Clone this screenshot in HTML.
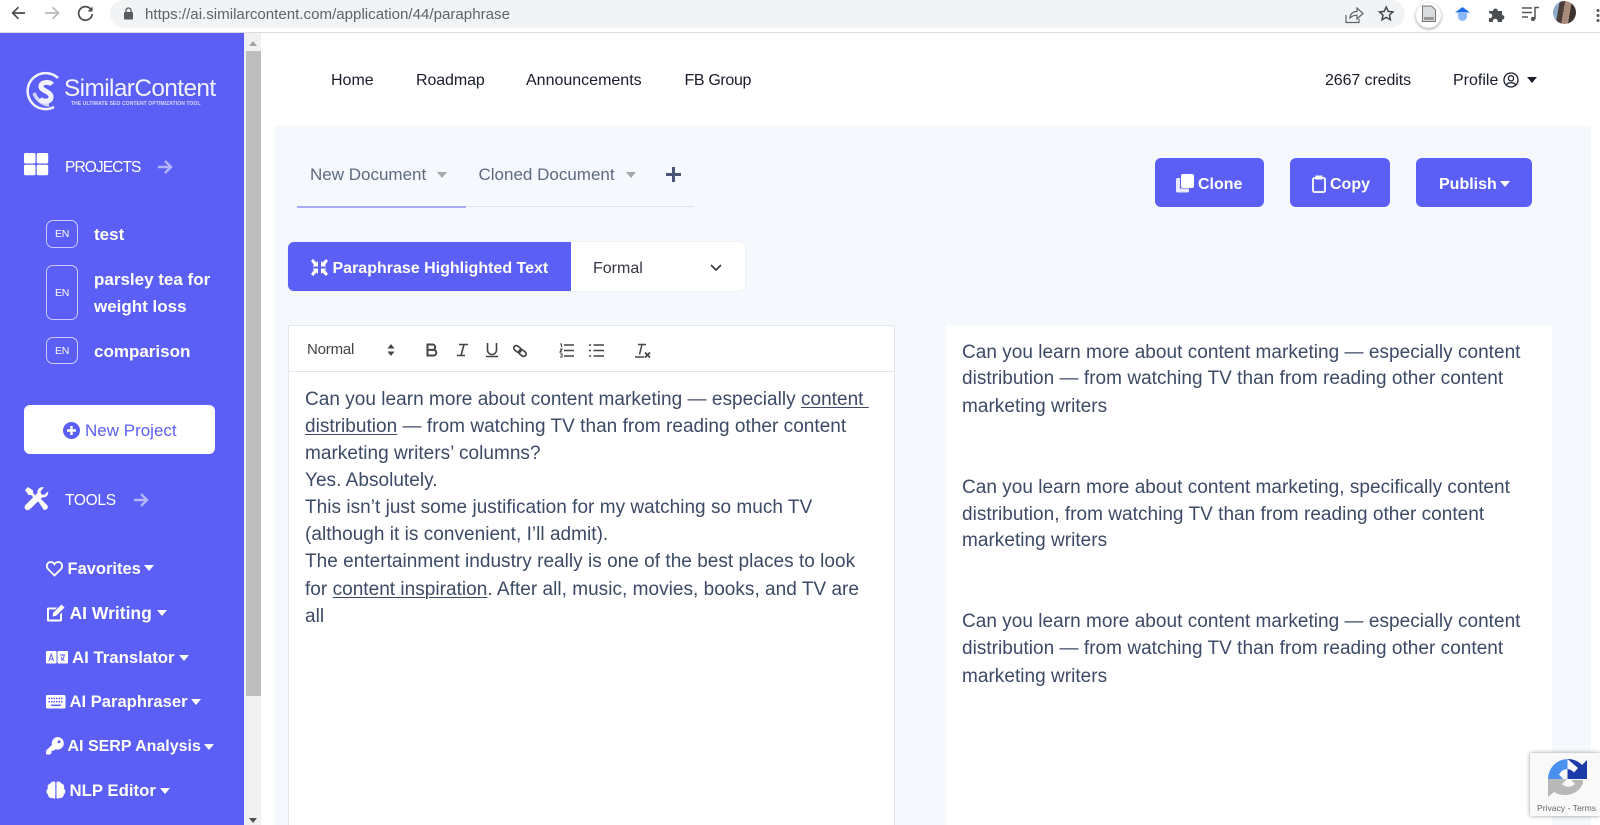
<!DOCTYPE html>
<html><head><meta charset="utf-8"><title>Paraphrase</title>
<style>
html,body{margin:0;padding:0;width:1600px;height:825px;overflow:hidden;background:#fff;font-family:"Liberation Sans",sans-serif}
.a{position:absolute;white-space:nowrap;line-height:20px}
svg{position:absolute;overflow:visible}
.side{color:#fff;font-weight:bold;font-size:17px}
.nav{color:#1a1d2b;font-size:16px;top:71px}
.l{position:absolute;white-space:nowrap;font-size:19px;letter-spacing:.03px;line-height:27px;color:#3c4a66}
.l u{text-underline-offset:2px;text-decoration-thickness:1px}
.badge{position:absolute;left:46px;width:30px;border:1.3px solid #c9caff;border-radius:7px;color:#fff;font-size:10.500px;letter-spacing:-.3px;display:flex;align-items:center;justify-content:center}
.btn{position:absolute;background:#5c5ff6;border-radius:6px;top:158px;height:49px}
.btnt{color:#fff;font-weight:bold;font-size:16px}
.car{position:absolute;width:0;height:0;border-left:5px solid transparent;border-right:5px solid transparent;border-top:6px solid #fff}
</style></head><body>

<!-- browser chrome -->
<div style="position:absolute;left:0;top:0;width:1600px;height:32px;background:#fff;border-bottom:1px solid #dcdcdc"></div>
<svg style="left:0;top:0" width="100" height="30" fill="none" stroke-width="1.7">
<path d="M25 13H13M18.500 7.200L12.600 13l5.900 5.800" stroke="#4a4d50"/>
<path d="M45 13h13M52.500 7.200L58.400 13l-5.900 5.800" stroke="#b5b7b9"/>
<path d="M91 9.500A6.800 6.800 0 1 0 92.200 14" stroke="#4a4d50"/><path d="M92.500 6.500v5h-5z" fill="#4a4d50"/>
</svg>
<div style="position:absolute;left:110px;top:0;width:1295px;height:28px;background:#f1f3f4;border-radius:14px"></div>
<svg style="left:123px;top:7px" width="11" height="13"><rect x="1" y="5" width="9" height="7.500" rx="1" fill="#5a5c5f"/><path d="M3 5.500V3.500a2.500 2.500 0 0 1 5 0v2" fill="none" stroke="#5a5c5f" stroke-width="1.300"/></svg>
<div class="a" style="left:145px;top:5px;font-size:15.100px;color:#5f6368">https://ai.similarcontent.com/application/44/paraphrase</div>
<svg style="left:1344px;top:5px" width="20" height="20" fill="none" stroke="#5f6368" stroke-width="1.200"><path d="M2 10v7.500h13V14M6 13c0-4 3-6.500 7-6.500V3l6 5.500-6 5.500v-3.800c-3 0-5 .8-7 2.800z"/></svg>
<svg style="left:1378px;top:5px" width="17" height="17" fill="none" stroke="#45484b" stroke-width="1.500"><path d="M8.200 2l2 4.400 4.700.5-3.500 3.200 1 4.700-4.200-2.400-4.200 2.400 1-4.700L1.500 6.900l4.700-.5z"/></svg>
<div style="position:absolute;left:1416px;top:3px;width:25px;height:25px;border-radius:50%;background:#fff;box-shadow:0 1px 3px #999"></div>
<svg style="left:1421px;top:5px" width="16" height="18"><path d="M1.500 1h9l4 4v11.500h-13z" fill="#dadbdc" stroke="#777" stroke-width="1"/><rect x="3" y="12" width="10" height="3" fill="#999"/></svg>
<svg style="left:1455px;top:6px" width="16" height="16"><path d="M0 6.500L7.500 1 15 6.500z" fill="#1a6ce8"/><path d="M3 7h9v3.500A4.500 4.500 0 0 1 3 10.500z" fill="#8ab8f8"/></svg>
<svg style="left:1488px;top:5px" width="18" height="18"><path d="M1 6h4a2.400 2.400 0 1 1 4.800 0h4.200v4a2.400 2.400 0 1 1 0 4.800V17H9.500a2.400 2.400 0 1 0-4.500 0H1v-4a2.400 2.400 0 1 0 0-4.500z" fill="#4c4f52"/></svg>
<svg style="left:1522px;top:6px" width="18" height="16" fill="none" stroke="#55585b" stroke-width="1.500"><path d="M0 2h10M0 6.500h10M0 11h6M13 13V1.500h4"/><circle cx="11" cy="13" r="2.200" fill="#55585b" stroke="none"/></svg>
<div style="position:absolute;left:1553px;top:1px;width:23px;height:23px;border-radius:50%;background:linear-gradient(100deg,#8fa9c9 0 25%,#4a3c38 25% 45%,#a98a7a 45% 70%,#3b3230 70%)"></div>
<svg style="left:1596px;top:9px" width="4" height="14" fill="#555"><circle cx="2" cy="1.500" r="1.500"/><circle cx="2" cy="6.500" r="1.500"/><circle cx="2" cy="11.500" r="1.500"/></svg>

<!-- sidebar -->
<div style="position:absolute;left:0;top:33px;width:244px;height:792px;background:#5c5ff6"></div>
<div style="position:absolute;left:244px;top:33px;width:2px;height:792px;background:#eef"></div>
<div style="position:absolute;left:246px;top:33px;width:15px;height:792px;background:#f1f1f1"></div>
<div style="position:absolute;left:246px;top:51px;width:15px;height:645px;background:#bebebe"></div>
<div class="car" style="left:249px;top:41px;border-top:0;border-bottom:5px solid #a3a3a3;border-left-width:4.500px;border-right-width:4.500px"></div>
<div class="car" style="left:249px;top:818px;border-top:5px solid #505050;border-left-width:4.500px;border-right-width:4.500px"></div>

<!-- logo -->
<svg style="left:24px;top:71px" width="40" height="40" fill="none" stroke="#f2f2ff"><path d="M34 7A18 18 0 1 0 30 36" stroke-width="2.500"/><path d="M10 22A18 18 0 0 0 25 34" stroke-width="3.500" opacity=".8"/><path d="M28 13.500c-2-2.500-10-3.500-11 1.500-1 5 11 5 10 12-1 4-8 4-11 1" stroke-width="5"/></svg>
<div class="a" style="left:64px;top:76px;font-size:24.400px;color:#f2f2ff;letter-spacing:-.6px;line-height:26px">SimilarContent</div>
<div class="a" style="left:71px;top:100px;font-size:5px;line-height:8px;color:#d8d9ff;font-weight:bold;letter-spacing:.1px">THE ULTIMATE SEO CONTENT OPTIMIZATION TOOL</div>

<!-- projects -->
<svg style="left:24px;top:153px" width="25" height="22" fill="#fff"><rect width="11.500" height="10.500" rx="1.500"/><rect x="12.700" width="11.500" height="10.500" rx="1.500"/><rect y="11.700" width="11.500" height="10.500" rx="1.500"/><rect x="12.700" y="11.700" width="11.500" height="10.500" rx="1.500"/></svg>
<div class="a" style="left:65px;top:158px;font-size:15.500px;color:#fff;letter-spacing:-.9px">PROJECTS</div>
<svg style="left:158px;top:160px" width="14" height="14" fill="none" stroke="#b3b5fb" stroke-width="2.400"><path d="M0 7h12.500M7 1l6 6-6 6"/></svg>

<div class="badge" style="top:220px;height:26px">EN</div>
<div class="a side" style="left:94px;top:225px">test</div>
<div class="badge" style="top:265px;height:53px">EN</div>
<div class="a side" style="left:94px;top:270px">parsley tea for</div>
<div class="a side" style="left:94px;top:297px">weight loss</div>
<div class="badge" style="top:337px;height:25px">EN</div>
<div class="a side" style="left:94px;top:342px">comparison</div>

<div style="position:absolute;left:24px;top:405px;width:191px;height:49px;background:#fff;border-radius:6px"></div>
<svg style="left:63px;top:422px" width="17" height="17"><circle cx="8.500" cy="8.500" r="8.500" fill="#5c5ff6"/><path d="M8.500 4v9M4 8.500h9" stroke="#fff" stroke-width="2.400"/></svg>
<div class="a" style="left:85px;top:421px;font-size:17px;color:#5c5ff6">New Project</div>

<!-- tools -->
<svg style="left:24px;top:486px" width="25" height="25" fill="#fff"><path d="M1 4l3-3 5 3.500v2.500l5.500 5.500-2 2L7 9H4.500z"/><path d="M24 5.500l-3.800 3.500-3-.7-.7-3L20 1.500c-3-1.200-7 .8-6.500 5.500L1.500 19a3 3 0 0 0 4.300 4.300L18 11.500c4.500.5 7-3.200 6-6z"/><path d="M14 15l2.500-2.500 7 7a3 3 0 0 1-4 4z"/></svg>
<div class="a" style="left:65px;top:491px;font-size:15.500px;color:#fff;letter-spacing:-.3px">TOOLS</div>
<svg style="left:134px;top:493px" width="14" height="14" fill="none" stroke="#b3b5fb" stroke-width="2.400"><path d="M0 7h12.500M7 1l6 6-6 6"/></svg>

<svg style="left:46px;top:561px" width="17" height="16" fill="none" stroke="#fff" stroke-width="1.800"><path d="M8.500 14.500L2 8C-.5 5 1.500 1 4.700 1c1.800 0 3 1 3.800 2.300C9.300 2 10.500 1 12.300 1c3.200 0 5.200 4 2.700 7z"/></svg>
<div class="a side" style="left:67.500px;top:558.500px;font-size:16.500px">Favorites</div><div class="car" style="left:144px;top:565px"></div>

<svg style="left:46px;top:603px" width="20" height="19"><path d="M2 4.500h9l-2 2H3v10h11v-5l2-2V17a1.500 1.500 0 0 1-1.500 1.500h-12A1.500 1.500 0 0 1 1 17V6a1.500 1.500 0 0 1 1-1.500z" fill="#fff"/><path d="M6.500 13.500l.7-3.700L15.500 1.500l3 3-8.300 8.300z" fill="#fff"/></svg>
<div class="a side" style="left:69.500px;top:603px;font-size:17.500px">AI Writing</div><div class="car" style="left:157px;top:610px"></div>

<svg style="left:46px;top:651px" width="22" height="13"><rect width="10.500" height="12.500" rx="1" fill="#fff"/><rect x="11.500" width="10.500" height="12.500" rx="1" fill="#fff"/><path d="M3 10l2.200-7 2.300 7M3.800 8h3M14 4h5M16.500 3v1.500M15 9.500c2-1 3-3 3.200-5M15 6c.5 1.500 2 3 3.500 3.500" stroke="#5c5ff6" stroke-width="1" fill="none"/></svg>
<div class="a side" style="left:72px;top:648px;font-size:16.800px">AI Translator</div><div class="car" style="left:179px;top:655px"></div>

<svg style="left:46px;top:695px" width="20" height="14"><rect width="19.500" height="13.500" rx="1.500" fill="#fff"/><path d="M2.500 3.500h15M2.500 6.800h15" stroke="#5c5ff6" stroke-width="1.500" stroke-dasharray="1.500 1"/><path d="M5 10.300h10" stroke="#5c5ff6" stroke-width="1.500"/></svg>
<div class="a side" style="left:69.500px;top:692px;font-size:16.600px">AI Paraphraser</div><div class="car" style="left:191px;top:699px"></div>

<svg style="left:46px;top:737px" width="18" height="18"><path d="M11.500 0a6.300 6.300 0 1 1-2.200 12.200L7.800 13.800H5.500V16l-1.500 1.500H1a1 1 0 0 1-1-1v-2.700L6 7.800A6.300 6.300 0 0 1 11.500 0z" fill="#fff"/><circle cx="13" cy="4.800" r="1.500" fill="#5c5ff6"/></svg>
<div class="a side" style="left:67.500px;top:737px;font-size:16px">AI SERP Analysis</div><div class="car" style="left:204px;top:744px"></div>

<svg style="left:46px;top:781px" width="20" height="18" fill="#fff"><path d="M9.300 1C8 0 5 .5 4.500 2.500 2 3 1 5.500 2 7.500 0 9 0 12 2 13.500c0 2.500 2.500 4 4.500 3.500 1 1 2.800.8 2.800-.5z"/><path d="M10.500 1c1.300-1 4.300-.5 4.800 1.500 2.500.5 3.500 3 2.500 5 2 1.500 2 4.500 0 6 0 2.500-2.500 4-4.500 3.500-1 1-2.800.8-2.800-.5z"/></svg>
<div class="a side" style="left:69.500px;top:781px;font-size:16.800px">NLP Editor</div><div class="car" style="left:160px;top:788px"></div>

<!-- top nav -->
<div class="a nav" style="left:331px">Home</div>
<div class="a nav" style="left:416px;letter-spacing:-.1px">Roadmap</div>
<div class="a nav" style="left:526px">Announcements</div>
<div class="a nav" style="left:684.500px;letter-spacing:-.35px">FB Group</div>
<div class="a nav" style="left:1325px;letter-spacing:-.1px">2667 credits</div>
<div class="a nav" style="left:1453px">Profile</div>
<svg style="left:1503px;top:72px" width="16" height="16" fill="none" stroke="#1a1d2b" stroke-width="1.300"><circle cx="8" cy="8" r="7"/><circle cx="8" cy="6.300" r="2.600"/><path d="M3.500 13c1-3 8-3 9 0"/></svg>
<div class="car" style="left:1527px;top:77px;border-top-color:#1a1d2b"></div>

<!-- content bg -->
<div style="position:absolute;left:275px;top:126px;width:1316px;height:699px;background:#f5f8fc"></div>

<!-- tabs -->
<div class="a" style="left:310px;top:165px;font-size:17px;color:#5d6a80">New Document</div>
<div class="car" style="left:437px;top:172px;border-top-color:#a8a8a8"></div>
<div class="a" style="left:478.500px;top:165px;font-size:17px;color:#5d6a80">Cloned Document</div>
<div class="car" style="left:626px;top:172px;border-top-color:#a8a8a8"></div>
<svg style="left:666px;top:167px" width="15" height="15"><path d="M7.500 0v15M0 7.500h15" stroke="#4a5578" stroke-width="3"/></svg>
<div style="position:absolute;left:297px;top:206px;width:397px;height:1px;background:#e1e4ea"></div>
<div style="position:absolute;left:297px;top:206px;width:169px;height:1.500px;background:#a9abf9"></div>

<!-- action buttons -->
<div class="btn" style="left:1155px;width:109px"></div>
<svg style="left:1176px;top:174px" width="18" height="19" fill="#fff"><path d="M1.500 4H4v10.500h9V17a1.500 1.500 0 0 1-1.500 1.500h-10A1.500 1.500 0 0 1 0 17V5.500A1.500 1.500 0 0 1 1.500 4z" opacity=".85"/><rect x="5" width="13" height="14" rx="2"/></svg>
<div class="a btnt" style="left:1198px;top:175px">Clone</div>
<div class="btn" style="left:1290px;width:100px"></div>
<svg style="left:1312px;top:175px" width="14" height="18" fill="none" stroke="#fff" stroke-width="1.800"><rect x="1" y="3" width="12" height="14" rx="1.500"/><rect x="4" y="1" width="6" height="3" fill="#fff" stroke-width="1"/></svg>
<div class="a btnt" style="left:1330px;top:175px">Copy</div>
<div class="btn" style="left:1416px;width:116px"></div>
<div class="a btnt" style="left:1439px;top:175px">Publish</div>
<div class="car" style="left:1500px;top:181px"></div>

<!-- paraphrase bar -->
<div style="position:absolute;left:288px;top:242px;width:457px;height:49px;background:#fff;border-radius:6px;box-shadow:0 0 0 1px #eef1f6"></div>
<div style="position:absolute;left:288px;top:242px;width:283px;height:49px;background:#5c5ff6;border-radius:6px 0 0 6px"></div>
<svg style="left:311px;top:259px" width="17" height="17" fill="#fff"><path d="M0 2l2-2 3.500 3.500L7 2v5.500H1.500L3 6zM17 2l-2-2-3.500 3.500L10 2v5.500h5.500L14 6zM0 15l2 2 3.500-3.500L7 15V9.500H1.500L3 11zM17 15l-2 2-3.500-3.500L10 15V9.500h5.500L14 11z"/></svg>
<div class="a btnt" style="left:332.500px;top:259px;font-size:16px">Paraphrase Highlighted Text</div>
<div class="a" style="left:593px;top:259px;font-size:16px;color:#3a3346">Formal</div>
<svg style="left:710px;top:264px" width="12" height="8" fill="none" stroke="#343a40" stroke-width="1.600"><path d="M1 1l5 5 5-5"/></svg>

<!-- editor -->
<div style="position:absolute;left:288px;top:325px;width:607px;height:500px;background:#fff;border:1px solid #e2e6ee;border-bottom:0;box-sizing:border-box"></div>
<div style="position:absolute;left:288px;top:371px;width:607px;height:1px;background:#e2e6ee"></div>
<div class="a" style="left:307px;top:340px;font-size:15px;color:#444;letter-spacing:-.2px">Normal</div>
<svg style="left:387px;top:344px" width="8" height="12" fill="#444"><path d="M4 0l3.500 4.500h-7zM4 12L.5 7.500h7z"/></svg>
<svg style="left:425px;top:343px" width="14" height="14" fill="none" stroke="#444" stroke-width="2"><path d="M2.500 1.500h5a2.700 2.700 0 0 1 0 5.400h-5zM2.500 6.900h6a2.800 2.800 0 0 1 0 5.600h-6z"/></svg>
<svg style="left:456px;top:343px" width="13" height="14" fill="none" stroke="#444" stroke-width="1.600"><path d="M3 1.500h9M1 12.500h8M8 1.500L5 12.500"/></svg>
<svg style="left:485px;top:342px" width="14" height="16" fill="none" stroke="#444" stroke-width="1.600"><path d="M2.500 1v7a4.500 4.500 0 0 0 9 0V1M1 14.500h12"/></svg>
<svg style="left:513px;top:343px" width="16" height="15" fill="none" stroke="#444" stroke-width="1.700"><rect x="-3" y="-2" width="8" height="5" rx="2.500" transform="translate(4 5) rotate(38)"/><rect x="-3" y="-2" width="8" height="5" rx="2.500" transform="translate(9 9) rotate(38)"/></svg>
<svg style="left:559px;top:343px" width="15" height="15" fill="none" stroke="#444" stroke-width="1.500"><path d="M5 2h10M5 7.500h10M5 13h10" /><path d="M1 1h1.500v3M1 6h2L1 9h2M1 11h2v3H1" stroke-width="1.100"/></svg>
<svg style="left:589px;top:343px" width="15" height="15" fill="none" stroke="#444" stroke-width="1.500"><path d="M4.500 2H15M4.500 7.500H15M4.500 13H15M0 2h2M0 7.500h2M0 13h2"/></svg>
<svg style="left:635px;top:343px" width="16" height="16" fill="none" stroke="#444" stroke-width="1.500"><path d="M3 1.500h8M7 1.500L4.500 11.500M0 14h9"/><path d="M10 9.500l5 5M15 9.500l-5 5" stroke-width="1.800"/></svg>

<div class="l" style="left:305px;top:386px">Can you learn more about content marketing — especially <u>content&nbsp;</u></div>
<div class="l" style="left:305px;top:413px"><u>distribution</u> — from watching TV than from reading other content</div>
<div class="l" style="left:305px;top:440px">marketing writers’ columns?</div>
<div class="l" style="left:305px;top:467px">Yes. Absolutely.</div>
<div class="l" style="left:305px;top:494px">This isn’t just some justification for my watching so much TV</div>
<div class="l" style="left:305px;top:521px">(although it is convenient, I’ll admit).</div>
<div class="l" style="left:305px;top:548px">The entertainment industry really is one of the best places to look</div>
<div class="l" style="left:305px;top:576px">for <u>content inspiration</u>. After all, music, movies, books, and TV are</div>
<div class="l" style="left:305px;top:603px">all</div>

<!-- results -->
<div style="position:absolute;left:946px;top:325px;width:606px;height:500px;background:#fff"></div>
<div class="l" style="left:962px;top:339px">Can you learn more about content marketing — especially content</div>
<div class="l" style="left:962px;top:365px">distribution — from watching TV than from reading other content</div>
<div class="l" style="left:962px;top:393px">marketing writers</div>
<div class="l" style="left:962px;top:474px">Can you learn more about content marketing, specifically content</div>
<div class="l" style="left:962px;top:501px">distribution, from watching TV than from reading other content</div>
<div class="l" style="left:962px;top:527px">marketing writers</div>
<div class="l" style="left:962px;top:608px">Can you learn more about content marketing — especially content</div>
<div class="l" style="left:962px;top:635px">distribution — from watching TV than from reading other content</div>
<div class="l" style="left:962px;top:663px">marketing writers</div>

<!-- recaptcha -->
<div style="position:absolute;left:1530px;top:753px;width:70px;height:63px;background:#f9f9f9;box-shadow:0 0 4px #999;border-radius:2px 0 0 2px"></div>
<svg style="left:1548px;top:759px" width="40" height="40" fill="none">
<path d="M0 20A20 20 0 0 1 19.500 0V10A10 10 0 0 0 11 15.500L15 20z" fill="#4a90f0"/>
<path d="M19.500 0A20 20 0 0 1 34 6L39 1V20H19.500V10A10 10 0 0 1 26 13.500L30 9z" fill="#1c3aa9"/>
<path d="M0 20H19L14 25A9 9 0 0 0 27 25L23 21H35V24A19 17 0 0 1 6 33L0 38z" fill="#b8b8b8"/>
</svg>
<div class="a" style="left:1537px;top:802px;font-size:8.600px;line-height:12px;color:#666">Privacy - Terms</div>

</body></html>
